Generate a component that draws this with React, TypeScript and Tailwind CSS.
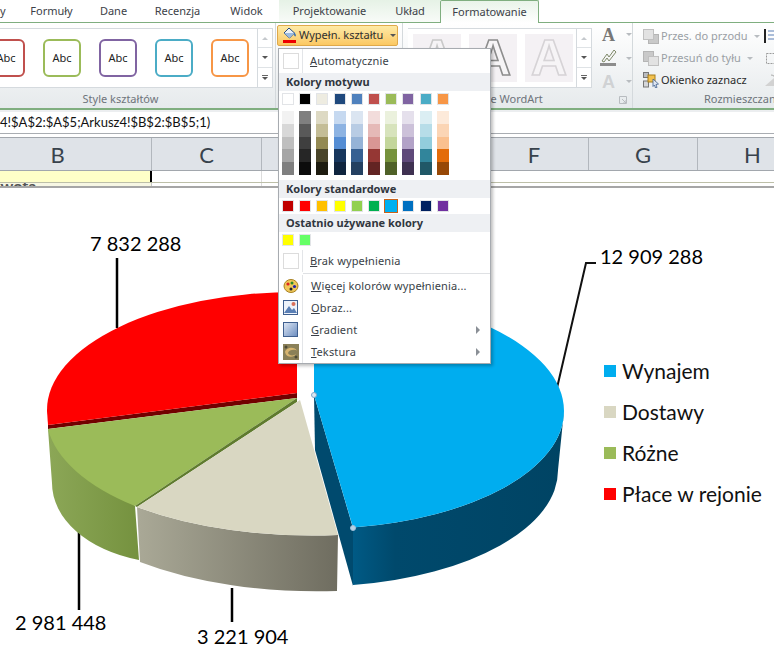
const theme = ['#ffffff', '#000000', '#eeece1', '#1f497d', '#4f81bd', '#c0504d', '#9bbb59', '#8064a2', '#4bacc6', '#f79646'];
const shades = [
  ['#f2f2f2', '#7f7f7f', '#ddd9c3', '#c6d9f0', '#dbe5f1', '#f2dcdb', '#ebf1dd', '#e5e0ec', '#dbeef3', '#fdeada'],
  ['#d8d8d8', '#595959', '#c4bd97', '#8db3e2', '#b8cce4', '#e5b9b7', '#d7e3bc', '#ccc1d9', '#b7dde8', '#fbd5b5'],
  ['#bfbfbf', '#3f3f3f', '#938953', '#548dd4', '#95b3d7', '#d99694', '#c3d69b', '#b2a2c7', '#92cddc', '#fac08f'],
  ['#a5a5a5', '#262626', '#494429', '#17365d', '#366092', '#953734', '#76923c', '#5f497a', '#31859b', '#e36c09'],
  ['#7f7f7f', '#0c0c0c', '#1d1b10', '#0f243e', '#244061', '#632423', '#4f6128', '#3f3151', '#205867', '#974806'],
];
const standard = ['#c00000', '#ff0000', '#ffc000', '#ffff00', '#92d050', '#00b050', '#00b0f0', '#0070c0', '#002060', '#7030a0'];
const legend = [
  { label: 'Wynajem', color: 'bg-[#00adef]' },
  { label: 'Dostawy', color: 'bg-[#d9d7c2]' },
  { label: 'Różne', color: 'bg-[#9bbb59]' },
  { label: 'Płace w rejonie', color: 'bg-[#ff0000]' },
];
const shapes = ['border-[#c0504d]', 'border-[#9bbb59]', 'border-[#8064a2]', 'border-[#4bacc6]', 'border-[#f79646]'];

function Swatches({ colors, selected }: { colors: string[]; selected?: string }) {
  return (
    <div className="flex gap-[5.2px] pl-[3px]">
      {colors.map((c, i) => (
        <div
          key={i}
          className={`h-3 w-3 shrink-0 ${c === selected ? 'outline outline-1 outline-[#c8621a]' : 'border border-[#e2e4e7]'}`}
          style={{ backgroundColor: c }}
        />
      ))}
    </div>
  );
}

function MenuHeader({ children }: { children: string }) {
  return <div className="flex h-[18px] items-center bg-[#eef0f3] pl-[7px] text-[11px] font-bold text-[#30363e]">{children}</div>;
}

function MenuItem({ icon, first, rest, arrow }: { icon: React.ReactNode; first: string; rest: string; arrow?: boolean }) {
  return (
    <div className="flex h-[22px] items-center text-[11px] tracking-[0.15px] text-[#3a3f47]">
      <div className="flex h-full w-6 shrink-0 items-center justify-center border-r border-[#e3e5e8]">{icon}</div>
      <span className="pl-2"><span className="underline">{first}</span>{rest}</span>
      {arrow && <div className="ml-auto mr-[10px] h-0 w-0 border-y-[4px] border-l-[4px] border-y-transparent border-l-[#8a8f96]" />}
    </div>
  );
}

function FillMenu() {
  return (
    <div className="absolute left-[278px] top-[48px] z-10 flex h-[316px] w-[213px] flex-col border border-[#a7abb0] bg-white font-['Noto_Sans',sans-serif] shadow-[2px_2px_3px_rgba(0,0,0,0.25)]">
      <div className="flex h-6 items-center text-[11px] tracking-[0.15px] text-[#3a3f47]">
        <div className="flex h-full w-6 items-center justify-center border-r border-[#e3e5e8]">
          <div className="h-4 w-4 border border-[#dcdcdc]" />
        </div>
        <span className="pl-[7px]"><span className="underline">A</span>utomatycznie</span>
      </div>
      <MenuHeader>Kolory motywu</MenuHeader>
      <div className="mt-[2px]"><Swatches colors={theme} /></div>
      <div className="mt-[6px] flex gap-[5.2px] pl-[3px]">
        {theme.map((_, col) => (
          <div key={col} className="flex w-3 shrink-0 flex-col">
            {shades.map((row, i) => (
              <div key={i} className="h-[12.8px]" style={{ backgroundColor: row[col] }} />
            ))}
          </div>
        ))}
      </div>
      <div className="mt-[5px]"><MenuHeader>Kolory standardowe</MenuHeader></div>
      <div className="mt-[2px]"><Swatches colors={standard} selected="#00b0f0" /></div>
      <div className="mt-[2px]"><MenuHeader>Ostatnio używane kolory</MenuHeader></div>
      <div className="mt-[2px]"><Swatches colors={['#ffff00', '#66ff66']} /></div>
      <div className="mt-1 flex h-[22px] items-center text-[11px] tracking-[0.15px] text-[#3a3f47]">
        <div className="flex h-full w-6 items-center justify-center border-r border-[#e3e5e8]">
          <div className="h-4 w-4 border border-[#dcdcdc]" />
        </div>
        <span className="pl-[7px]"><span className="underline">B</span>rak wypełnienia</span>
      </div>
      <div className="mb-[1px] ml-6 mt-[1px] h-px bg-[#dfe1e4]" />
      <MenuItem
        first="W"
        rest="ięcej kolorów wypełnienia..."
        icon={
          <svg width="16" height="16" viewBox="0 0 16 16">
            <ellipse cx="8" cy="8" rx="7" ry="6.5" fill="#f0c85a" stroke="#a88020" />
            <circle cx="5" cy="6" r="1.6" fill="#d22" />
            <circle cx="9" cy="5" r="1.5" fill="#2a8a2a" />
            <circle cx="11.5" cy="8.5" r="1.6" fill="#22a" />
            <circle cx="8" cy="11" r="1.5" fill="#222" />
          </svg>
        }
      />
      <MenuItem
        first="O"
        rest="braz..."
        icon={
          <svg width="15" height="15" viewBox="0 0 15 15">
            <rect x="0.5" y="0.5" width="14" height="14" fill="#eef3fa" stroke="#3f5f8f" />
            <path d="M1 13 L6 6 L9 10 L11 8 L14 13 Z" fill="#5a7fb5" />
            <circle cx="10.5" cy="4" r="2" fill="#d9705a" />
          </svg>
        }
      />
      <MenuItem first="G" rest="radient" arrow icon={<div className="h-[15px] w-[15px] border border-[#3f5f8f] bg-gradient-to-br from-[#dde6f3] to-[#6f8fc0]" />} />
      <MenuItem
        first="T"
        rest="ekstura"
        arrow
        icon={
          <svg width="16" height="16" viewBox="0 0 16 16">
            <rect width="16" height="16" fill="#8a8058" />
            <path d="M2 8 C3 3 12 2 14 7 C13 5 6 5 5 9 C6 12 11 12 13 10 C11 14 3 14 2 8 Z" fill="#d8b570" />
            <circle cx="3" cy="3" r="1.5" fill="#4d4936" />
            <circle cx="13" cy="13" r="1.5" fill="#4d4936" />
          </svg>
        }
      />
    </div>
  );
}

function Caret({ light }: { light?: boolean }) {
  return <div className={`h-0 w-0 border-x-[3px] border-t-[3px] border-x-transparent ${light ? 'border-t-[#b8bcc0]' : 'border-t-[#555]'}`} />;
}

function ScrollButtons() {
  return (
    <div className="flex w-[15px] shrink-0 flex-col border-l border-[#d5dade]">
      <div className="flex h-5 items-center justify-center border-b border-[#dfe3e6]"><div className="h-0 w-0 border-x-[3px] border-b-[3px] border-x-transparent border-b-[#c5c9cd]" /></div>
      <div className="flex h-5 items-center justify-center border-b border-[#dfe3e6]"><Caret /></div>
      <div className="flex h-5 flex-col items-center justify-center gap-[1px]"><div className="h-px w-[6px] bg-[#666]" /><Caret /></div>
    </div>
  );
}

function Squares({ front }: { front: boolean }) {
  return (
    <svg width="16" height="15" viewBox="0 0 16 15" className="shrink-0">
      {front ? (
        <>
          <rect x="5.5" y="5.5" width="10" height="9" fill="#c9c9c9" stroke="#b5b5b5" />
          <rect x="0.5" y="0.5" width="10" height="10" fill="#e2e2e2" stroke="#c0c0c0" />
        </>
      ) : (
        <>
          <rect x="0.5" y="0.5" width="10" height="10" fill="#c9c9c9" stroke="#b5b5b5" />
          <rect x="5.5" y="5.5" width="10" height="9" fill="#e2e2e2" stroke="#c0c0c0" />
        </>
      )}
    </svg>
  );
}

function WordArtTile({ stroke }: { stroke: string }) {
  return (
    <div className="h-12 w-12 shrink-0 bg-[#f4f1f4]">
      <svg viewBox="0 0 48 48" className="h-12 w-12">
        <text x="24" y="41" textAnchor="middle" fontSize="50" fontWeight="700" fill="#f6f4f6" stroke={stroke} strokeWidth="1.6" className="font-['Liberation_Sans',sans-serif]">A</text>
      </svg>
    </div>
  );
}

function Ribbon() {
  return (
    <div className="flex h-[87px] shrink-0 border-b-[2px] border-[#7fae7f] bg-gradient-to-b from-white to-[#e6eaec] text-[11px] text-[#9a9fa5]">
      <div className="flex w-[276px] shrink-0 flex-col border-r border-[#d4d9dc]">
        <div className="mt-[5px] flex h-[60px] w-[273px] border-y border-r border-[#d5dade] bg-white">
          <div className="flex flex-1 items-center gap-[18px]">
            {shapes.map((s, i) => (
              <div key={s} className={`flex h-[38px] w-[38px] shrink-0 items-center justify-center rounded-[6px] border-[2px] bg-white text-[11px] text-[#222] ${s} ${i === 0 ? 'ml-[-13px]' : ''}`}>
                Abc
              </div>
            ))}
          </div>
          <ScrollButtons />
        </div>
        <div className="flex flex-1 items-center justify-center pr-[34px] pt-[2px] text-[#6e747b]">Style kształtów</div>
      </div>

      <div className="w-[127px] shrink-0 border-r border-[#d4d9dc] pl-px pt-[2px]">
        <div className="flex h-[21px] w-[121px] items-center gap-[2px] rounded-[2px] border border-[#dfa94a] bg-gradient-to-b from-[#fdeaa6] to-[#fbc862] pl-[4px] text-[#2f2f2f]">
          <svg width="15" height="17" viewBox="0 0 15 17" className="shrink-0">
            <path d="M2 6 L7 1 L12.5 6 L7.5 11 Z" fill="#eef3f8" stroke="#274a7c" />
            <path d="M2 6 L12.5 6 L7.5 11 Z" fill="#9dbbe0" />
            <path d="M12 5 C14 7 14.5 9 13.2 9.6 C12 9 11.8 7 12 5 Z" fill="#3a6fb0" />
            <rect x="1" y="13" width="13" height="3" fill="#ee0000" />
          </svg>
          <span>Wypełn. kształtu</span>
          <div className="ml-[5px]"><Caret /></div>
        </div>
      </div>

      <div className="flex w-[230px] shrink-0 flex-col border-r border-[#d4d9dc]">
        <div className="flex h-[66px] shrink-0">
          <div className="ml-[5px] mt-[5px] flex h-[60px] w-[184px] shrink-0 border-y border-r border-[#d5dade] bg-white">
            <div className="flex flex-1 items-center gap-2 pl-[5px]">
              <WordArtTile stroke="#c9c9c9" />
              <WordArtTile stroke="#8d8d8d" />
              <WordArtTile stroke="#d6d3d6" />
            </div>
            <ScrollButtons />
          </div>
          <div className="ml-[7px] mt-[2px] flex h-[66px] flex-col justify-between">
            <div className="flex h-[19px] items-center gap-[8px]">
              <span className="w-[19px] text-center font-['Liberation_Serif',serif] text-[18px] font-bold leading-none text-[#777]">A</span>
              <Caret light />
            </div>
            <div className="flex h-[19px] items-center gap-[8px]">
              <svg width="19" height="18" viewBox="0 0 19 18">
                <path d="M3 12 L8 5 L10 8 L15 1 L17 3 L10 12 L8 9 L5 13 Z" fill="#f5f5f5" stroke="#7f8a6a" />
                <rect x="1" y="14" width="16" height="3" fill="#8c8c8c" />
              </svg>
              <Caret light />
            </div>
            <div className="flex h-[19px] items-center gap-[8px]">
              <span className="w-[19px] text-center font-['Liberation_Sans',sans-serif] text-[18px] font-bold leading-none text-[#d0d2d4]">A</span>
              <Caret light />
            </div>
          </div>
        </div>
        <div className="flex flex-1 items-center whitespace-nowrap pl-[69px] pt-[2px] text-[#6e747b]">
          <span>Style WordArt</span>
          <svg width="8" height="8" viewBox="0 0 8 8" className="ml-[76px] shrink-0">
            <path d="M0.5 0.5 H7.5 V7.5 H0.5 Z M3 3 L7 7 M7 4 V7 H4" fill="none" stroke="#b8bcc0" />
          </svg>
        </div>
      </div>

      <div className="flex min-w-0 flex-1 flex-col">
        <div className="flex flex-1">
          <div className="ml-[10px] mt-[2px] w-[121px] shrink-0">
            <div className="flex h-[22px] items-center gap-[2px] whitespace-nowrap">
              <Squares front />
              <span>Przes. do przodu</span>
              <div className="ml-[4px]"><Caret light /></div>
            </div>
            <div className="flex h-[22px] items-center gap-[2px] whitespace-nowrap">
              <Squares front={false} />
              <span>Przesuń do tyłu</span>
              <div className="ml-[4px]"><Caret light /></div>
            </div>
            <div className="flex h-[22px] items-center gap-[2px] whitespace-nowrap text-[#2b2b2b]">
              <svg width="16" height="16" viewBox="0 0 16 16" className="shrink-0">
                <rect x="0.5" y="0.5" width="5" height="5" fill="#b9bcc0" stroke="#777" />
                <rect x="0.5" y="9" width="5" height="6" fill="#d5d7da" stroke="#777" />
                <rect x="5" y="3" width="7" height="7" fill="#f2c14e" stroke="#a67c1a" />
                <path d="M10 7 L15.5 12 L13 12.5 L14 15.5 L12.5 16 L11.5 13 L10 14.5 Z" fill="#dfe6f0" stroke="#3f5f8f" strokeWidth="0.8" />
              </svg>
              <span>Okienko zaznacz</span>
            </div>
          </div>
          <div className="mt-[2px] flex flex-col">
            <div className="flex h-[22px] items-center">
              <svg width="12" height="15" viewBox="0 0 12 15"><rect x="0" y="0" width="2" height="14" fill="#222" /><path d="M4 2 H12 M4 6 H12 M4 10 H12" stroke="#5a7fb5" /></svg>
            </div>
            <div className="flex h-[22px] items-center">
              <svg width="12" height="15" viewBox="0 0 12 15"><rect x="2.5" y="2.5" width="10" height="10" fill="none" stroke="#9a9a9a" strokeDasharray="2 1" /></svg>
            </div>
            <div className="flex h-[22px] items-center">
              <svg width="12" height="15" viewBox="0 0 12 15"><path d="M1 13 L10 13 L10 5 Z" fill="#d2d2d2" /><path d="M7 2 C10 2 11 4 11 6" fill="none" stroke="#aaa" /></svg>
            </div>
          </div>
        </div>
        <div className="flex h-[19px] items-center whitespace-nowrap pl-[71px] text-[#6e747b]">Rozmieszczanie</div>
      </div>
    </div>
  );
}

function Tabs() {
  const tabs = [
    { label: 'y', w: 'w-[17px] justify-start', tint: false },
    { label: 'Formuły', w: 'w-[69px] justify-center', tint: false },
    { label: 'Dane', w: 'w-[55px] justify-center', tint: false },
    { label: 'Recenzja', w: 'w-[73px] justify-center', tint: false },
    { label: 'Widok', w: 'w-[65px] justify-center', tint: false },
    { label: 'Projektowanie', w: 'w-[101px] justify-center', tint: true },
    { label: 'Układ', w: 'w-[60px] justify-center', tint: true },
  ];
  return (
    <div className="flex h-[23px] shrink-0 border-b border-[#7fae7f] bg-white text-[11px] text-[#3c4148]">
      {tabs.map(t => (
        <div key={t.label} className={`flex items-center ${t.w} ${t.tint ? 'bg-gradient-to-b from-[#e6f2e6] to-[#f8fbf8]' : ''}`}>
          {t.label}
        </div>
      ))}
      <div className="flex h-[23px] w-[99px] items-center justify-center rounded-t-[2px] border-x border-t border-[#7fae7f] bg-gradient-to-b from-[#e9f4e9] to-white">
        Formatowanie
      </div>
    </div>
  );
}

function SheetHeader() {
  const cols = [
    { label: 'B', w: 'w-[152px] pr-[36px]' },
    { label: 'C', w: 'w-[110px]' },
    { label: '', w: 'w-[109px]' },
    { label: '', w: 'w-[109px]' },
    { label: 'F', w: 'w-[109px]' },
    { label: 'G', w: 'w-[109px]' },
    { label: 'H', w: 'w-[110px]' },
  ];
  return (
    <>
      <div className="flex h-[22px] shrink-0 items-center whitespace-nowrap border-b border-[#a9adb2] bg-white font-['Lato',sans-serif] text-[13px] text-[#111]">
        4!$A$2:$A$5;Arkusz4!$B$2:$B$5;1)
      </div>
      <div className="h-[3px] shrink-0 bg-white" />
      <div className="flex h-[34px] shrink-0 border-y border-[#a2a7ad] bg-[#dfe3e8] font-['Lato',sans-serif] text-[22px] text-[#38424c]">
        {cols.map((c, i) => (
          <div key={i} className={`flex shrink-0 items-center justify-center border-r border-[#b2b7bd] ${c.w}`}>{c.label}</div>
        ))}
      </div>
      <div className="flex h-3 shrink-0 border-b border-[#bdbfa8]">
        <div className="w-[152px] shrink-0 border-r-2 border-black bg-[#ffffc8]" />
        <div className="w-[110px] shrink-0 border-r border-[#dcdcdc]" />
        <div className="flex-1" />
      </div>
      <div className="flex h-[3px] shrink-0 overflow-hidden">
        <div className="w-[152px] shrink-0 overflow-hidden border-r border-[#c8c8c8] bg-[#f7f7e4] font-['Lato',sans-serif] text-[16px] font-bold leading-[16px] text-[#555]">
          <div className="ml-[-8px] mt-[-5px]">kwota</div>
        </div>
        <div className="w-[110px] shrink-0 border-r border-[#dcdcdc]" />
      </div>
      <div className="h-[2px] shrink-0 bg-[#a6a6a6]" />
    </>
  );
}

function PieChart() {
  return (
    <div className="relative min-h-0 flex-1 bg-white">
      <svg viewBox="0 188 774 474" className="block h-[474px] w-[774px]">
        <defs>
          <linearGradient id="sideBlue" x1="353" x2="564" y1="0" y2="0" gradientUnits="userSpaceOnUse">
            <stop offset="0" stopColor="#005a85" />
            <stop offset="0.2" stopColor="#00496c" />
            <stop offset="1" stopColor="#004464" />
          </linearGradient>
          <linearGradient id="sideBeige" x1="140" x2="338" y1="0" y2="0" gradientUnits="userSpaceOnUse">
            <stop offset="0" stopColor="#a9a896" />
            <stop offset="1" stopColor="#6f6d60" />
          </linearGradient>
          <linearGradient id="sideGreen" x1="48" x2="138" y1="0" y2="0" gradientUnits="userSpaceOnUse">
            <stop offset="0" stopColor="#8ca757" />
            <stop offset="1" stopColor="#75923f" />
          </linearGradient>
        </defs>

        <path d="M117 258 V328" stroke="#000" strokeWidth="2.5" />
        <path d="M79 524 V610" stroke="#000" strokeWidth="2.5" />
        <path d="M232 588 V622" stroke="#000" strokeWidth="2.5" />
        <path d="M557 388 L586 263 H596" fill="none" stroke="#111" strokeWidth="2" />

        {/* blue slice */}
        <path d="M314 395 L353 528 L353 586 L315 450 Z" fill="#004a6e" />
        <path d="M353 527.6 A250 118 0 0 0 564 411 L558 470 A244 116 0 0 1 353 585 Z" fill="url(#sideBlue)" />
        <path d="M314 395 L314 293 A250 118 0 0 1 564 411 A250 118 0 0 1 353 527.6 Z" fill="#00adef" />

        {/* red slice */}
        <path d="M48 425 L297 393 L297 398 L48 429 Z" fill="#720000" />
        <path d="M297 292 A250 118 0 0 0 47 411 L48 425 L297 393 Z" fill="#ff0000" />

        {/* green slice */}
        <path d="M48 429 L135 506 L139 560 A120 80 0 0 1 52 483 Z" fill="url(#sideGreen)" />
        <path d="M297 398 L48 429 A250 120 0 0 0 135 506 Z" fill="#9bbb59" />
        <path d="M297 398 L135 506 L137 507 L297 402 Z" fill="#5f7b2e" />

        {/* beige slice */}
        <path d="M137 507 A270 120 0 0 0 338 535 L337 591 A270 120 0 0 1 140 562 Z" fill="url(#sideBeige)" />
        <path d="M300 400 L338 535 A270 120 0 0 1 137 507 Z" fill="#d9d7c2" />

        <circle cx="314" cy="395" r="2.5" fill="#dbe8f2" stroke="#7fa6c8" />
        <circle cx="353" cy="528" r="2.5" fill="#b9d2e6" stroke="#9fc0da" />

        <g className="font-['Lato',sans-serif] text-[20px]" fill="#000">
          <text x="90" y="251">7 832 288</text>
          <text x="600" y="264">12 909 288</text>
          <text x="15" y="630">2 981 448</text>
          <text x="197" y="644">3 221 904</text>
        </g>
      </svg>
      <div className="absolute left-[604px] top-[169px] flex flex-col gap-[14px] font-['Lato',sans-serif] text-[21px] leading-[27px] text-[#111]">
        {legend.map(l => (
          <div key={l.label} className="flex items-center gap-[6px] whitespace-nowrap">
            <div className={`h-3 w-3 ${l.color}`} />
            <span>{l.label}</span>
          </div>
        ))}
      </div>
    </div>
  );
}

export default function App() {
  return (
    <div className="relative flex h-[662px] w-[774px] flex-col overflow-hidden bg-white font-['Noto_Sans',sans-serif]">
      <Tabs />
      <Ribbon />
      <div className="h-[2px] shrink-0 bg-[#eceef0]" />
      <SheetHeader />
      <PieChart />
      <FillMenu />
    </div>
  );
}
